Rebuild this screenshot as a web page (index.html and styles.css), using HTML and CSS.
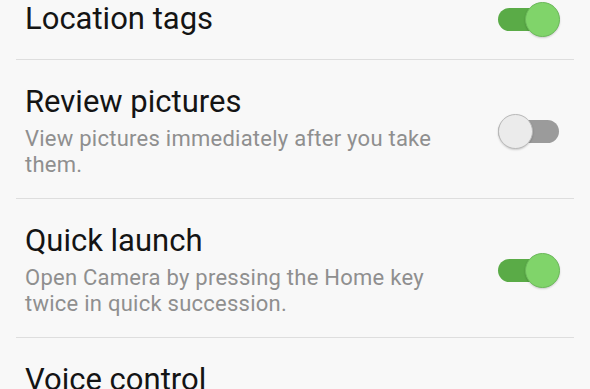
FILE: index.html
```html
<!DOCTYPE html>
<html>
<head>
<meta charset="utf-8">
<link rel="stylesheet" href="styles.css">
</head>
<body>
<div class="list">
  <div class="row row-single">
    <div class="text">
      <div class="title">Location tags</div>
    </div>
    <span class="switch on"><span class="knob"></span></span>
  </div>
  <div class="divider"></div>
  <div class="row">
    <div class="text">
      <div class="title">Review pictures</div>
      <div class="sub">View pictures immediately after you take them.</div>
    </div>
    <span class="switch off"><span class="knob"></span></span>
  </div>
  <div class="divider"></div>
  <div class="row">
    <div class="text">
      <div class="title">Quick launch</div>
      <div class="sub">Open Camera by pressing the Home key twice in quick succession.</div>
    </div>
    <span class="switch on"><span class="knob"></span></span>
  </div>
  <div class="divider"></div>
  <div class="row">
    <div class="text">
      <div class="title">Voice control</div>
    </div>
  </div>
</div>
</body>
</html>
```

FILE: styles.css
```css
html, body {
  margin: 0;
  padding: 0;
  background: #f8f8f8;
  overflow: hidden;
}
body {
  width: 590px;
  height: 389px;
  font-family: Roboto, "Noto Sans", sans-serif;
}
.list {
  margin-top: -25px;
}
.row {
  display: flex;
  align-items: center;
  padding: 24px 31px 20px 25px;
}
.row-single {
  padding-top: 26px;
  padding-bottom: 22px;
}
.text {
  flex: 1;
  min-width: 0;
}
.title {
  font-size: 31px;
  line-height: 36px;
  color: #141414;
}
.sub {
  margin-top: 6px;
  font-size: 22px;
  line-height: 26px;
  letter-spacing: 0.25px;
  color: #8f8f8f;
  max-width: 420px;
}
.divider {
  height: 1px;
  margin: 0 16px;
  background: #dedede;
}
.switch {
  position: relative;
  flex: none;
  width: 61px;
  height: 23px;
  border-radius: 12px;
  margin-left: 20px;
}
.switch.on { background: #5aab47; }
.switch.off { background: #9b9b9b; }
.knob {
  position: absolute;
  top: -6px;
  width: 33px;
  height: 33px;
  border-radius: 50%;
  box-shadow: 0 1px 2px rgba(0,0,0,0.18);
}
.switch.on .knob {
  right: -1px;
  background: #80d46a;
  border: 1px solid #6bb95a;
}
.switch.off .knob {
  left: 0;
  background: #ebebeb;
  border: 1px solid #b9b9b9;
}
```
